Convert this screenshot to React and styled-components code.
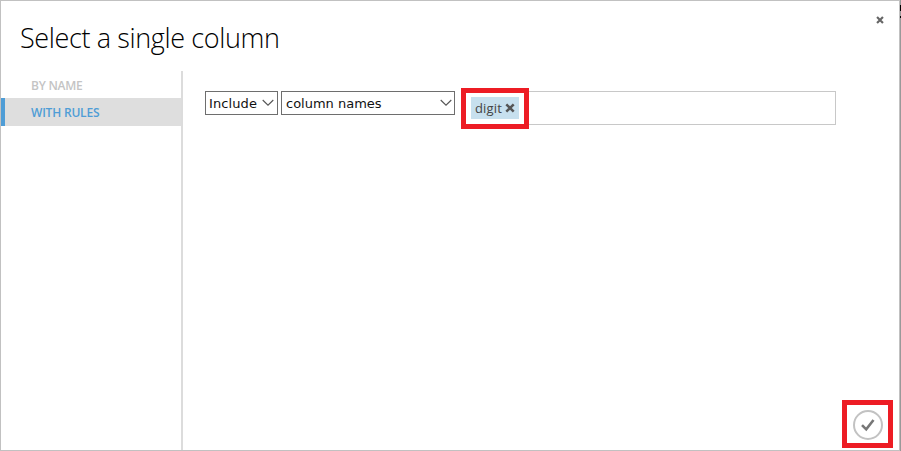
import React from "react";
import styled, { createGlobalStyle } from "styled-components";

const GlobalStyle = createGlobalStyle`
  *, *::before, *::after { box-sizing: border-box; }
  body { margin: 0; background: #a0a0a0; overflow: hidden; }
`;

const Backdrop = styled.div`
  width: 901px;
  height: 451px;
  padding-right: 1px;
  background: linear-gradient(#000, #000) 900px 5px / 1px 6px no-repeat,
    linear-gradient(#000, #000) 900px 16px / 1px 2px no-repeat, #999;
`;

const Dialog = styled.section`
  display: flex;
  flex-direction: column;
  width: 900px;
  height: 451px;
  background: #fff;
  border: 1px solid #c1c1c1;
  font-family: "Open Sans", "Noto Sans", sans-serif;
`;

const Header = styled.header`
  display: flex;
  justify-content: space-between;
  height: 70px;
  padding: 15px 15px 0 19px;
  flex: none;
`;

const Title = styled.h1`
  margin: 1px 0 0;
  font-size: 27px;
  font-weight: 300;
  line-height: 42px;
  letter-spacing: ${(p) => p.$tracking};
  color: #000;
  white-space: nowrap;
`;

const IconButton = styled.button`
  display: flex;
  align-self: ${(p) => p.$align || "center"};
  padding: 0;
  border: 0;
  background: none;
  color: ${(p) => p.$color};
`;

const Body = styled.div`
  display: flex;
  flex: 1;
  min-height: 0;
`;

const Sidebar = styled.nav`
  width: 182px;
  border-right: 2px solid #dcdcdc;
  flex: none;
`;

const Tab = styled.div`
  display: flex;
  align-items: center;
  height: ${(p) => (p.$active ? 28 : 27)}px;
  padding-left: ${(p) => (p.$active ? 26 : 30)}px;
  padding-top: ${(p) => (p.$active ? 2 : 3)}px;
  border-left: ${(p) => (p.$active ? "4px solid #4f9dd6" : "0")};
  background: ${(p) => (p.$active ? "#dedede" : "#fff")};
  color: ${(p) => (p.$active ? "#4f9dd6" : "#c4c4c4")};
  font-size: 12px;
  font-weight: 600;
  line-height: 16px;
  letter-spacing: ${(p) => p.$tracking};
`;

const Content = styled.main`
  display: flex;
  flex-direction: column;
  justify-content: space-between;
  flex: 1;
  padding: 17px 6px 2px 22px;
`;

const RuleRow = styled.div`
  display: flex;
  align-items: flex-start;
`;

const Select = styled.div`
  display: flex;
  align-items: center;
  justify-content: space-between;
  width: ${(p) => p.$width}px;
  height: 24px;
  margin: 3px ${(p) => p.$gap}px 0 0;
  padding: 2px ${(p) => p.$end}px 0 ${(p) => p.$start}px;
  border: 1px solid #6e6e6e;
  color: #111;
  font: 13px/20px "DejaVu Sans", sans-serif;
  letter-spacing: ${(p) => p.$tracking};
  white-space: nowrap;
`;

const ChevronIcon = styled.svg`
  margin-bottom: 3px;
`;

const TagField = styled.div`
  display: flex;
  align-items: flex-start;
`;

const Highlight = styled.div`
  display: flex;
  align-items: center;
  justify-content: center;
  width: ${(p) => p.$width}px;
  height: ${(p) => p.$height}px;
  padding: ${(p) => p.$top || 0}px 0 ${(p) => p.$bottom || 0}px;
  border: 5px solid #ed1c24;
  background: #fff;
`;

const Tag = styled.span`
  display: flex;
  align-items: center;
  justify-content: space-between;
  width: 48px;
  height: 22px;
  padding: 0 4px;
  background: #c7e0ee;
  color: #444;
  font-size: 13px;
  line-height: 20px;
  letter-spacing: 0.15px;
`;

const FieldRest = styled.div`
  width: 307px;
  height: 34px;
  margin-top: 3px;
  border: 1px solid #c8c8c8;
  border-left: 0;
`;

const Footer = styled.footer`
  display: flex;
  justify-content: flex-end;
`;

const ConfirmButton = styled.button`
  display: flex;
  align-items: center;
  justify-content: center;
  width: 30px;
  height: 30px;
  padding: 0;
  border: 2px solid #c2c2c2;
  border-radius: 50%;
  background: #fff;
`;

function Cross({ size, weight }) {
  return (
    <svg width={size} height={size} viewBox="0 0 10 10">
      <path d="M1.3 1.3 L8.7 8.7 M8.7 1.3 L1.3 8.7" stroke="currentColor" strokeWidth={weight} />
    </svg>
  );
}

function Chevron() {
  return (
    <ChevronIcon width="12" height="8" viewBox="0 0 12 8">
      <path d="M0.7 1 L6 6.2 L11.3 1" fill="none" stroke="#555" strokeWidth="1.1" />
    </ChevronIcon>
  );
}

export default function App() {
  return (
    <Backdrop>
      <GlobalStyle />
      <Dialog>
        <Header>
          <Title $tracking="-0.37px">Select a single column</Title>
          <IconButton $color="#666" $align="flex-start" aria-label="Close">
            <Cross size={8} weight={2.7} />
          </IconButton>
        </Header>
        <Body>
          <Sidebar>
            <Tab $tracking="-0.25px">BY NAME</Tab>
            <Tab $active $tracking="-0.2px">WITH RULES</Tab>
          </Sidebar>
          <Content>
            <RuleRow>
              <Select $width={73} $gap={3} $start={3} $end={3} $tracking="0.1px">
                Include
                <Chevron />
              </Select>
              <Select $width={174} $gap={6} $start={4} $end={2} $tracking="0px">
                column names
                <Chevron />
              </Select>
              <TagField>
                <Highlight $width={68} $height={41} $bottom={1}>
                  <Tag>
                    digit
                    <IconButton $color="#555" aria-label="Remove digit">
                      <Cross size={10} weight={2.5} />
                    </IconButton>
                  </Tag>
                </Highlight>
                <FieldRest />
              </TagField>
            </RuleRow>
            <Footer>
              <Highlight $width={51} $height={48} $top={2}>
                <ConfirmButton aria-label="Confirm">
                  <svg width="16" height="14" viewBox="0 0 16 14">
                    <path d="M2 7.2 L6.2 11.4 L13.5 2" fill="none" stroke="#777" strokeWidth="2.6" />
                  </svg>
                </ConfirmButton>
              </Highlight>
            </Footer>
          </Content>
        </Body>
      </Dialog>
    </Backdrop>
  );
}
